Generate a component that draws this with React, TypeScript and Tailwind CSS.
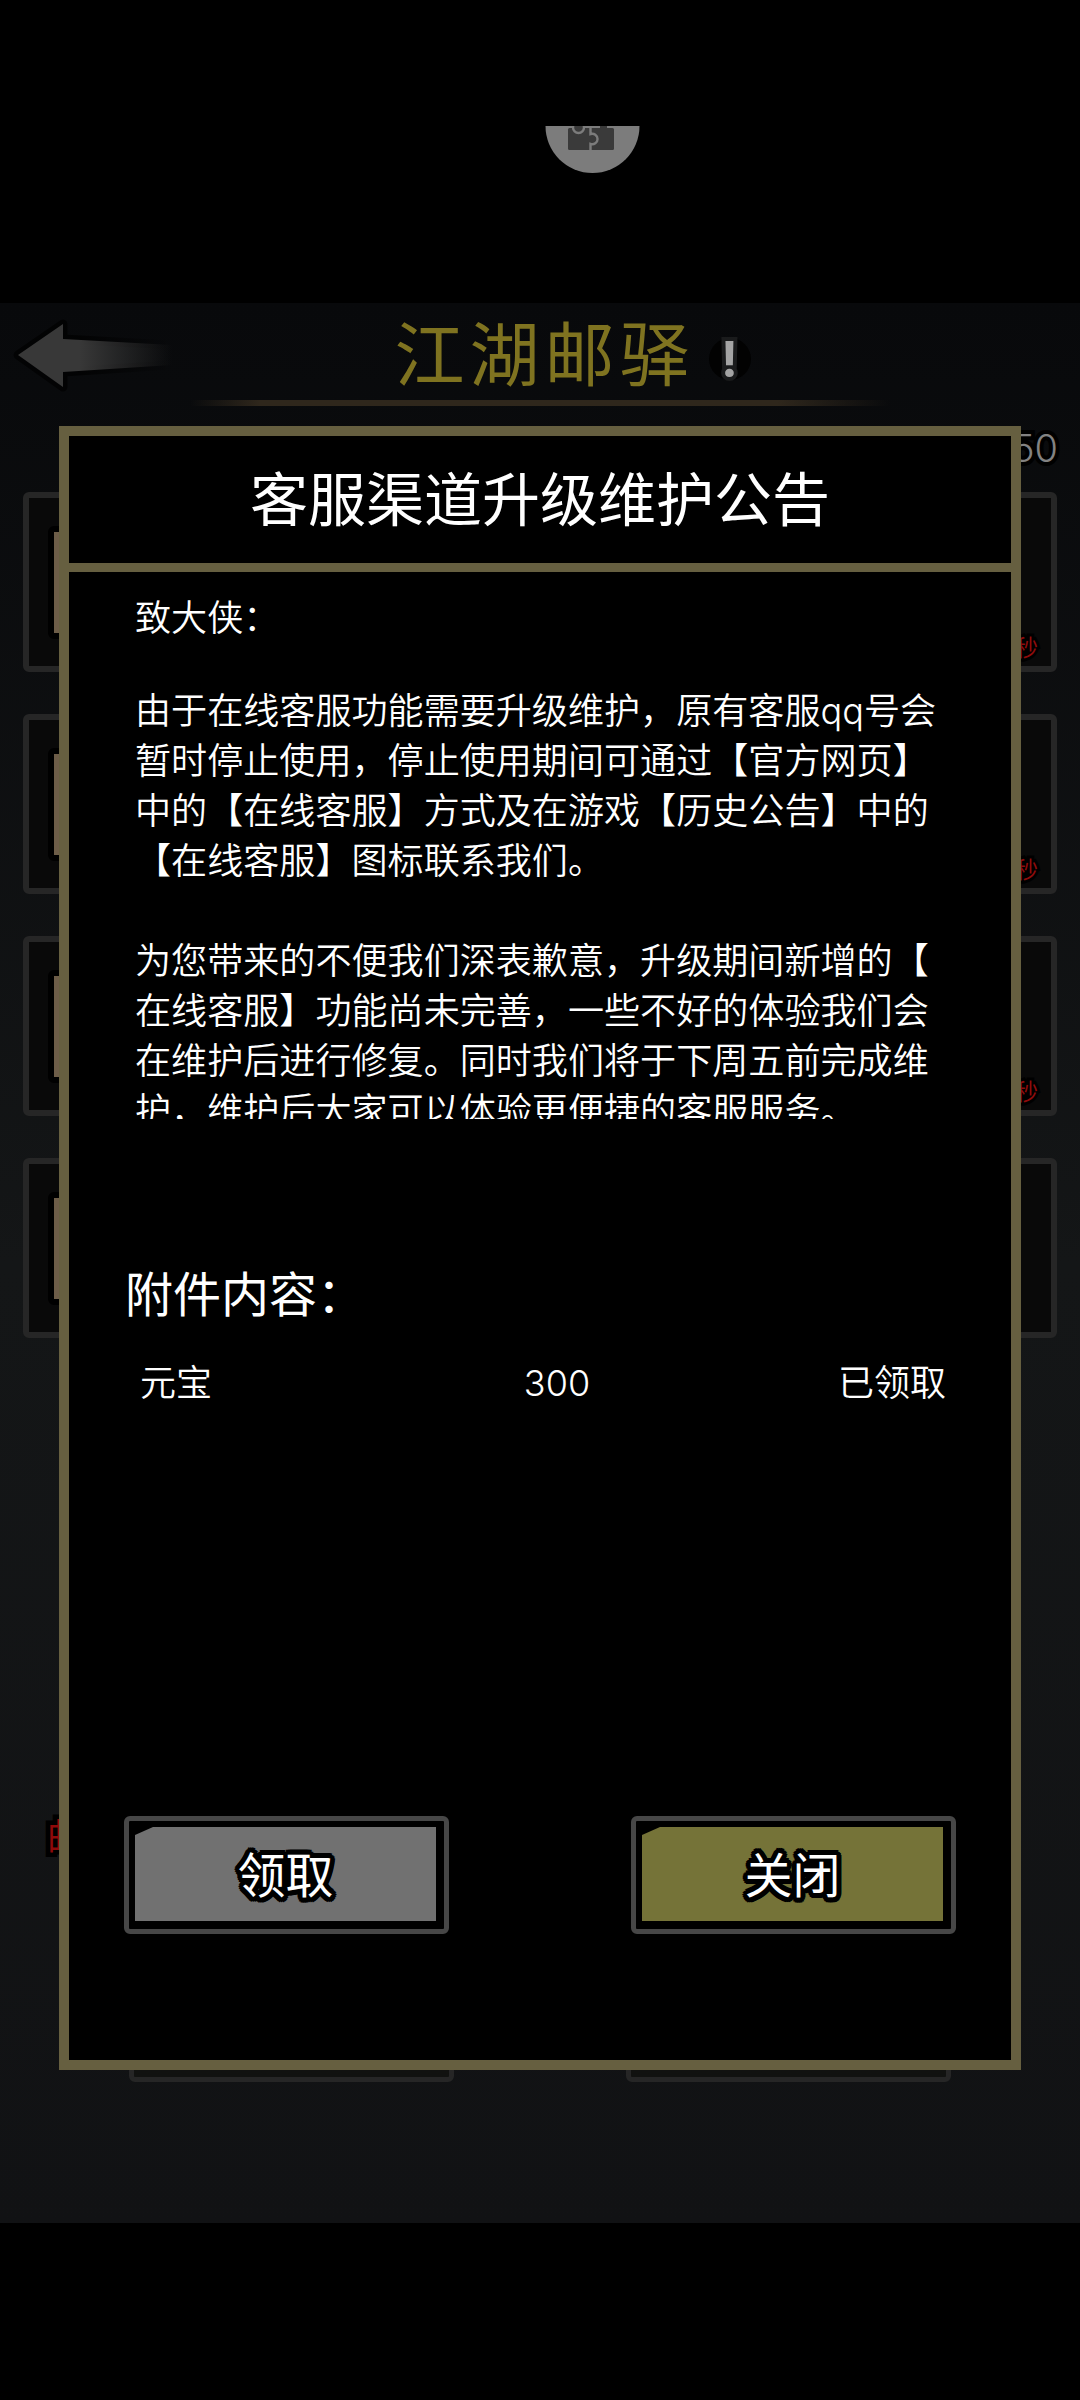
const BODY_LINES = [
  "由于在线客服功能需要升级维护，原有客服qq号会",
  "暂时停止使用，停止使用期间可通过【官方网页】",
  "中的【在线客服】方式及在游戏【历史公告】中的",
  "【在线客服】图标联系我们。",
  "",
  "为您带来的不便我们深表歉意，升级期间新增的【",
  "在线客服】功能尚未完善，一些不好的体验我们会",
  "在维护后进行修复。同时我们将于下周五前完成维",
  "护，维护后大家可以体验更便捷的客服服务。",
];

const mails = [
  { id: 1, timer: true },
  { id: 2, timer: true },
  { id: 3, timer: true },
  { id: 4, timer: false },
];

function FloatingBall() {
  return (
    <svg className="absolute left-[545px] top-[126px]" width="96" height="48" viewBox="0 0 96 48">
      <circle cx="47.5" cy="0" r="47" fill="#7c7c7c" />
      <rect x="23" y="2" width="46" height="22" rx="1.5" fill="#3a3a3a" />
      <path d="M45.5 0v8a5.300 5.300 0 1 1 0 10v6" fill="none" stroke="#7c7c7c" strokeWidth="2.400" />
      <circle cx="33.500" cy="1.500" r="5.500" fill="#3a3a3a" stroke="#7c7c7c" strokeWidth="2.400" />
      <path d="M55 0h7v3h-7z" fill="#3a3a3a" />
    </svg>
  );
}

function BackArrow() {
  return (
    <svg className="absolute left-0 top-3 h-20 w-48" viewBox="0 0 192 80">
      <defs>
        <linearGradient id="arrow" x1="18" x2="172" y1="0" y2="0" gradientUnits="userSpaceOnUse">
          <stop offset="0.4" stopColor="#383838" />
          <stop offset="1" stopColor="#383838" stopOpacity="0" />
        </linearGradient>
        <linearGradient id="edge" x1="18" x2="172" y1="0" y2="0" gradientUnits="userSpaceOnUse">
          <stop offset="0.4" stopColor="#000" />
          <stop offset="1" stopColor="#000" stopOpacity="0" />
        </linearGradient>
      </defs>
      <path d="M18 40 63 9v15l109 6v20L63 57v15z" fill="none" stroke="url(#edge)" strokeWidth="9" strokeLinejoin="round" opacity="0.7" />
      <path d="M18 40 63 9v15l109 6v20L63 57v15z" fill="url(#arrow)" />
    </svg>
  );
}

function MailCard({ timer }: { timer: boolean }) {
  return (
    <div className="relative flex h-[180px] items-center rounded-md border-[6px] border-[#262626] bg-[#090909] pl-[19px]">
      <div className="h-[113px] w-24 rounded-md border-[6px] border-black bg-[#6d5d48]" />
      {timer && (
        <span className="absolute bottom-1 right-[13px] text-[23px] leading-7 text-[#8f0c0c] [-webkit-text-stroke:6px_#000] [paint-order:stroke_fill]">
          秒
        </span>
      )}
    </div>
  );
}

function GameButton({ label, fill }: { label: string; fill: string }) {
  return (
    <button className="h-[118px] w-[325px] rounded-md border-[5px] border-[#474747] bg-black pb-2 pl-1.5 pr-2 pt-1.5">
      <div className={`flex h-[94px] w-[301px] items-center justify-center pt-[3px] [clip-path:polygon(18px_0,100%_0,100%_100%,0_100%,0_8px)] ${fill}`}>
        <span className="text-[48px] leading-[60px] text-white [text-shadow:5px_0_#000,4.6px_1.9px_#000,3.5px_3.5px_#000,1.9px_4.6px_#000,0_5px_#000,-1.9px_4.6px_#000,-3.5px_3.5px_#000,-4.6px_1.9px_#000,-5px_0_#000,-4.6px_-1.9px_#000,-3.5px_-3.5px_#000,-1.9px_-4.6px_#000,0_-5px_#000,1.9px_-4.6px_#000,3.5px_-3.5px_#000,4.6px_-1.9px_#000,2px_2px_#000,-2px_2px_#000,2px_-2px_#000,-2px_-2px_#000]">
          {label}
        </span>
      </div>
    </button>
  );
}

function Backdrop() {
  return (
    <div className="absolute inset-x-0 top-[303px] h-[1920px] overflow-hidden bg-linear-to-b from-[#08090b] via-[#141617] via-50% to-[#111214]">
      <BackArrow />
      <div className="flex h-[94px] items-center justify-center pl-[65px] pt-3">
        <h1 className="font-['KaiTi','Inter','Noto_Sans_CJK_SC',sans-serif] text-[70px] font-normal leading-[94px] tracking-[5px] text-[#7f7320]">
          江湖邮驿
        </h1>
        <span className="ml-3.5 mt-1.5 flex size-[42px] items-center justify-center rounded-full bg-[#020202] text-[50px] font-bold leading-[56px] text-[#a4a4a4] [-webkit-text-stroke:8px_#1a1b1c] [paint-order:stroke_fill]">
          !
        </span>
      </div>
      <div className="mx-auto mt-[3px] h-[6px] w-[700px] bg-[linear-gradient(to_right,transparent,#2f271c_10%,#2f271c_84%,transparent)]" />
      <div className="mt-[21px] pr-[22px] text-right text-[38px] font-[350] leading-[42px] text-[#828282] [-webkit-text-stroke:8px_#000] [paint-order:stroke_fill]">
        50
      </div>
      <div className="mx-[23px] mt-[23px] flex flex-col gap-[42px]">
        {mails.map((m) => (
          <MailCard key={m.id} timer={m.timer} />
        ))}
      </div>
      <p className="mt-[472px] pl-[47px] text-[38px] leading-[54px] text-[#8f0a0a] [-webkit-text-stroke:9px_#000] [paint-order:stroke_fill]">
        邮
      </p>
      <div className="mt-[100px] flex gap-[172px] pl-[129px]">
        <div className="h-[118px] w-[325px] rounded-md border-[5px] border-[#262626] bg-[#111210]" />
        <div className="h-[118px] w-[325px] rounded-md border-[5px] border-[#262626] bg-[#111210]" />
      </div>
    </div>
  );
}

function NoticeDialog() {
  return (
    <div className="absolute left-[59px] top-[426px] flex h-[1644px] w-[962px] flex-col border-[10px] border-[#665f40] bg-black text-white">
      <h2 className="flex h-[136px] shrink-0 items-center justify-center border-b-[9px] border-[#665f40] text-[58px] font-normal leading-[80px]">
        客服渠道升级维护公告
      </h2>
      <div className="h-[547px] shrink-0 overflow-hidden whitespace-nowrap pl-[66px] pt-[21px] text-[36.1px] font-[350] leading-[50px]">
        <p>致大侠：</p>
        <div className="mt-[43px]">
          {BODY_LINES.map((line, i) => (
            <p key={i} className="h-[50px]">{line}</p>
          ))}
        </div>
      </div>
      <h3 className="mt-[149px] pl-[56px] text-[48px] font-normal leading-[54px]">附件内容：</h3>
      <div className="mt-[34px] flex pl-[71px] pr-[65px] text-[36px] font-[350] leading-[54px]">
        <span className="w-[280px]">元宝</span>
        <span className="w-[274px] text-center">300</span>
        <span className="flex-1 text-right">已领取</span>
      </div>
      <div className="mt-auto mb-[126px] flex justify-between px-[55px]">
        <GameButton label="领取" fill="bg-[#717171]" />
        <GameButton label="关闭" fill="bg-[#757338]" />
      </div>
    </div>
  );
}

export default function App() {
  return (
    <div className="relative h-[2400px] w-[1080px] overflow-hidden bg-black font-['Inter','Noto_Sans_CJK_SC',sans-serif] [text-spacing-trim:space-all]">
      <FloatingBall />
      <Backdrop />
      <NoticeDialog />
    </div>
  );
}
